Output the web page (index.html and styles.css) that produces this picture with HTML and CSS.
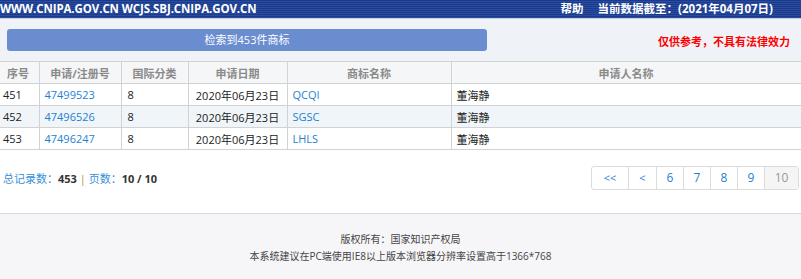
FILE: index.html
```html
<!DOCTYPE html>
<html lang="zh">
<head>
<meta charset="utf-8">
<link rel="stylesheet" href="styles.css">
</head>
<body>
<div class="topbar">
  <div class="domains">WWW.CNIPA.GOV.CN WCJS.SBJ.CNIPA.GOV.CN</div>
  <div class="topright"><span class="help">帮助</span><span>当前数据截至：(2021年04月07日)</span></div>
</div>
<div class="searchbar">
  <div class="resultbtn">检索到453件商标</div>
  <div class="notice">仅供参考，不具有法律效力</div>
</div>
<table class="grid">
  <colgroup>
    <col class="c1"><col class="c2"><col class="c3"><col class="c4"><col class="c5"><col class="c6">
  </colgroup>
  <thead>
    <tr><th>序号</th><th>申请/注册号</th><th>国际分类</th><th>申请日期</th><th>商标名称</th><th>申请人名称</th></tr>
  </thead>
  <tbody>
    <tr><td>451</td><td class="link">47499523</td><td>8</td><td>2020年06月23日</td><td class="link">QCQI</td><td>董海静</td></tr>
    <tr class="alt"><td>452</td><td class="link">47496526</td><td>8</td><td>2020年06月23日</td><td class="link">SGSC</td><td>董海静</td></tr>
    <tr><td>453</td><td class="link">47496247</td><td>8</td><td>2020年06月23日</td><td class="link">LHLS</td><td>董海静</td></tr>
  </tbody>
</table>
<div class="pagerow">
  <div class="summary"><span class="lbl">总记录数：</span><b>453</b> <span class="sep">|</span> <span class="lbl">页数：</span><b>10 / 10</b></div>
  <div class="pager">
    <span class="pg w1">&lt;&lt;</span><span class="pg w2">&lt;</span><span class="pg">6</span><span class="pg">7</span><span class="pg">8</span><span class="pg">9</span><span class="pg cur">10</span>
  </div>
</div>
<div class="footer">
  <div>版权所有：国家知识产权局</div>
  <div>本系统建议在PC端使用IE8以上版本浏览器分辨率设置高于1366*768</div>
</div>
</body>
</html>
```
FILE: styles.css
```css
html, body { margin: 0; padding: 0; }
body {
  font-family: "Open Sans", "Noto Sans CJK SC", sans-serif;
  font-size: 11px;
  color: #333;
  background: #fff;
  width: 801px;
}
.topbar {
  height: 18px;
  background: repeating-linear-gradient(to bottom, #1b3a8c 0, #1b3a8c 1px, #2a4c9f 1px, #2a4c9f 2px);
  color: #fff;
  display: flex;
  justify-content: space-between;
  align-items: center;
  font-size: 11.5px;
  font-weight: bold;
  line-height: 18px;
  border-bottom: 1px solid #c6d0e0;
}
.domains { letter-spacing: -0.1px; }
.topright { padding-right: 28px; display: flex; gap: 14px; }
.searchbar {
  height: 42px;
  background: #eff3f8;
  display: flex;
  align-items: center;
  justify-content: space-between;
  padding: 0 11px 0 7px;
}
.resultbtn {
  width: 480px;
  height: 22px;
  background: #6a8dd0;
  border-radius: 3px;
  color: #fff;
  text-align: center;
  line-height: 22px;
  font-size: 11px;
}
.notice {
  color: #f00;
  font-weight: bold;
  font-size: 11px;
  margin-top: 1px;
}
.grid {
  border-collapse: collapse;
  width: 801px;
  table-layout: fixed;
}
.c1 { width: 39px; } .c2 { width: 82px; } .c3 { width: 67px; } .c4 { width: 99px; } .c5 { width: 164px; } .c6 { width: 350px; }
.grid th, .grid td {
  border: 1px solid #d2d2d2;
  height: 21px;
  padding: 0 5px;
  font-size: 11px;
  white-space: nowrap;
  overflow: hidden;
}
.grid th:first-child, .grid td:first-child { border-left: none; padding-left: 3px; }
.grid th {
  background: #f5f6f7;
  color: #8a8a8a;
  font-weight: bold;
  text-align: center;
}
.grid th:first-child { text-align: left; padding-left: 7px; }
.grid td { color: #222; }
.grid td.link { color: #1f7fd0; }
.grid td:nth-child(3) { padding-left: 6px; }
.grid td:nth-child(4) { text-align: center; }
.grid tr.alt td { background: #f0f5f9; }
.pagerow {
  display: flex;
  justify-content: space-between;
  align-items: flex-start;
  padding: 16px 2px 0 3px;
  height: 63px;
  box-sizing: border-box;
}
.summary { margin-top: 4px; font-size: 11px; color: #333; }
.summary .lbl { color: #3a8fd8; }
.summary .sep { color: #c48a2a; }
.summary b { color: #333; }
.pager {
  display: flex;
  border: 1px solid #dcdcdc;
  border-radius: 3px;
  height: 22px;
}
.pg {
  width: 26px;
  border-left: 1px solid #dcdcdc;
  text-align: center;
  line-height: 22px;
  color: #1f7fd0;
  font-size: 12px;
}
.pg:first-child { border-left: none; }
.pg.w1 { width: 36px; font-size: 11px; }
.pg.w2 { width: 27px; font-size: 11px; }
.pg.cur { width: 33px; background: #f5f5f5; color: #999; }
.footer {
  border-top: 1px solid #d3dbe9;
  background: #f6f6f9;
  height: 66px;
  padding-top: 17px;
  box-sizing: border-box;
  text-align: center;
  font-size: 10px;
  color: #444;
  line-height: 17px;
}
```
